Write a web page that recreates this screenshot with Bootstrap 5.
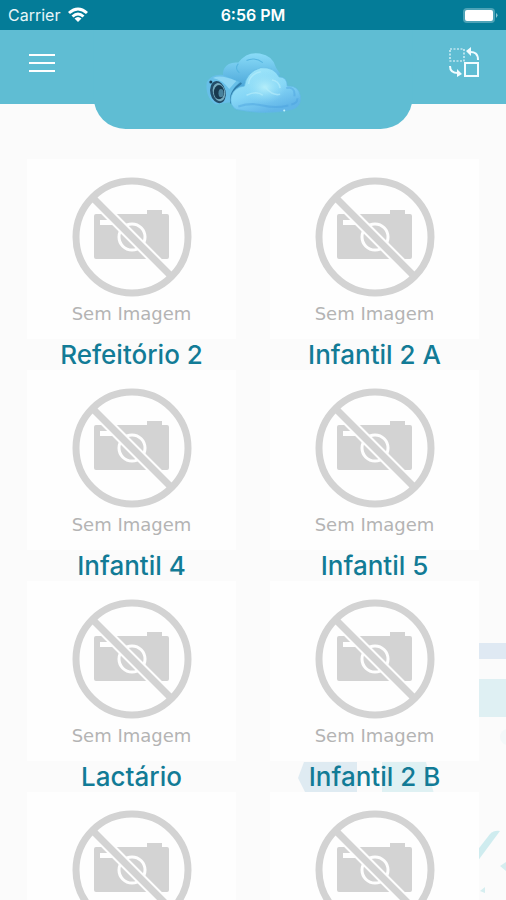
<!DOCTYPE html>
<html lang="pt-BR">
<head>
<meta charset="utf-8">
<meta name="viewport" content="width=device-width, initial-scale=1">
<title>Câmeras</title>
<link href="https://cdn.jsdelivr.net/npm/bootstrap@5.3.0/dist/css/bootstrap.min.css" rel="stylesheet">
<style>
  body { font-family: Inter, "Liberation Sans", sans-serif; background: #fbfbfb; }
  .screen { height: 100vh; }
  .status-bar { height: 30px; background: #047c98; color: #e6f6fa; font-size: 16px; line-height: 30px; }
  .status-bar .clock { font-weight: 600; color: #fff; }
  .app-header { height: 74px; background: #5fbdd3; }
  .header-notch { width: 63%; height: 99px; background: #5fbdd3; border-radius: 0 0 32px 32px; }
  .icon-btn { line-height: 0; }
  .backdrop { z-index: -1; }
  .rooms { padding: 55px 10px 0; }
  .room { padding: 0 17px; }
  .room-image { height: 180px; padding-top: 18px; background: #fefefe; }
  .room-image figcaption { font: 18px/20px "DejaVu Sans", sans-serif; color: #b4b4b4; margin-top: 7px; }
  .room-name { font-size: 26px; line-height: 31px; font-weight: 500; color: #127b96; }
</style>
<script src="https://cdn.jsdelivr.net/npm/bootstrap@5.3.0/dist/js/bootstrap.bundle.min.js"></script>
</head>
<body>
<svg class="d-none" aria-hidden="true">
  <symbol id="no-image" viewBox="0 0 120 120">
    <path fill="#d3d3d3" d="M22 39q0-2 2-2h51v-4h15v4h5q2 0 2 2v41q0 2-2 2H24q-2 0-2-2z"/>
    <path fill="#fefefe" d="M28 43h20v5H28z"/>
    <circle cx="60" cy="60" r="13" fill="none" stroke="#fefefe" stroke-width="3"/>
    <path stroke="#fefefe" stroke-width="11" d="M21 21l78 78"/>
    <path stroke="#d3d3d3" stroke-width="7" d="M20 20l80 80"/>
    <circle cx="60" cy="60" r="56" fill="none" stroke="#d3d3d3" stroke-width="7"/>
  </symbol>
</svg>
<div class="screen position-relative overflow-hidden">
  <svg class="backdrop position-absolute bottom-0 end-0" width="220" height="270" viewBox="0 0 220 270" aria-hidden="true">
    <path fill="#dfe9f3" d="M150 13h70v16h-70z"/>
    <path fill="#dff0f3" d="M150 49h70v38h-70z"/>
    <path fill="#dfebf2" d="M18 132h53v32H20l-8-16z"/>
    <path fill="#dff1f3" d="M96 132h44l8 32H96z"/>
    <path fill="#cfecef" d="M190 222l14-18q4-4 10-3l-23 31z"/>
    <path fill="#d5eef0" d="M214 236l6-4v9zM194 261l5-4v6z"/>
    <circle cx="222" cy="107" r="8" fill="#f3f8f9"/>
  </svg>
  <div class="status-bar d-flex justify-content-between position-relative px-2">
    <div class="d-flex align-items-center gap-2">
      <span>Carrier</span>
      <svg width="20" height="16" viewBox="0 0 20 16" fill="none" stroke="#fff" stroke-width="3" role="img" aria-label="Wi-Fi">
        <path d="M1 6q9-8 18 0M4.500 9.500q5.500-5 11 0"/><path fill="#fff" stroke="none" d="M6.500 11.500q3.500-3 7 0L10 15z"/>
      </svg>
    </div>
    <span class="clock position-absolute start-50 translate-middle-x">6:56 PM</span>
    <svg class="align-self-center" width="36" height="17" viewBox="0 0 36 17" role="img" aria-label="Bateria cheia">
      <rect x="1" y="1" width="32" height="15" rx="4" fill="#4da3b7"/>
      <rect x="3" y="3" width="28" height="11" rx="2" fill="#fff"/>
      <path fill="#8ac3d0" d="M34 6q3 2 0 5z"/>
    </svg>
  </div>
  <header class="app-header d-flex justify-content-between align-items-start">
    <button class="icon-btn btn border-0 p-0 ms-4 mt-3" type="button" aria-label="Menu">
      <svg width="36" height="34" viewBox="0 0 36 34" stroke="#fff" stroke-width="2"><path d="M5 9h26M5 17h26M5 25h26"/></svg>
    </button>
    <div class="header-notch position-absolute start-50 translate-middle-x text-center pt-3">
      <svg width="106" height="74" viewBox="201 47 104 72" role="img" aria-label="Nuvem com câmera">
        <defs>
          <linearGradient id="back" x2="0" y2="1"><stop stop-color="#8adcf8"/><stop offset="1" stop-color="#439fd5"/></linearGradient>
          <linearGradient id="front" x2=".5" y2="1"><stop stop-color="#a6eafb"/><stop offset=".6" stop-color="#85d6f6"/><stop offset="1" stop-color="#61b5e8"/></linearGradient>
          <radialGradient id="shine"><stop stop-color="#b5eefa"/><stop offset="1" stop-color="#8bdaf6" stop-opacity="0"/></radialGradient>
        </defs>
        <path fill="url(#back)" d="M231 86Q221 78 225 69Q229 62 239 63Q247 52 260 54Q273 56 276 68L280 74 268 88 239 92z"/>
        <path fill="none" stroke="#56b5e0" d="M239 64q-4 5 1 9M247 61q8-4 16 2"/>
        <path fill="#67bfe8" d="M208 82q5-8 15-7l17 7q-9 8-9 20l-14 2q-11-7-9-22z"/>
        <path fill="#8dd6f4" d="M214 78q8-4 23 3l-7 8q-6-9-16-11z"/>
        <ellipse cx="219" cy="92" rx="7.500" ry="11" fill="#234d69" transform="rotate(-13 219 92)"/>
        <ellipse cx="220" cy="92" rx="6" ry="9" fill="#75aabd" transform="rotate(-13 220 92)"/>
        <ellipse cx="220" cy="92" rx="5" ry="7" fill="#18394f"/>
        <ellipse cx="222" cy="93" rx="2.500" ry="4" fill="#49829c"/>
        <circle cx="212" cy="82" r="1.500" fill="#173b54"/>
        <path fill="none" stroke="#307eaa" stroke-width="2" d="M232 103q-2-12 10-20"/>
        <path fill="url(#front)" stroke="#60b9e3" stroke-width=".7" d="M237 109q-7-4-5-13 3-9 13-10 2-14 16-18 13-1 18 9 8 0 8 9 11-1 13 10 1 10-8 13-25 6-55 0z"/>
        <ellipse cx="265" cy="87" rx="21" ry="16" fill="url(#shine)"/>
        <path fill="none" stroke="#469edb" stroke-width="2" opacity=".4" d="M286 88q9-2 8 8M291 104q6-1 6-6M239 106q12-4 24-1t25 0"/>
        <path fill="none" stroke="#b9effb" stroke-width="1.500" opacity=".6" d="M249 84q1-10 12-12M247 95q10-5 16 0M272 80q7 1 8 8M266 88q7 8 14 6"/>
        <circle cx="284" cy="110" r="1" fill="#c6f4fb"/>
      </svg>
    </div>
    <button class="icon-btn btn border-0 p-0 me-4 mt-3 position-relative" type="button" aria-label="Alternar visualização">
      <svg width="36" height="34" viewBox="0 0 36 34" fill="none" stroke="#f2fcff">
        <path stroke-width="1.200" stroke-dasharray="2 1.500" d="M4 3h14v12H4z"/>
        <path stroke-width="2" d="M19 17h13v13H19zM23 6q9-1 9 8M4 20q0 7 8 7"/>
        <path fill="#f2fcff" stroke="none" d="M20 5l5-4v9zM16 28l-5-5v8z"/>
      </svg>
    </button>
  </header>
  <main class="rooms">
    <div class="row g-0 text-center">
      <div class="room col-6"><figure class="room-image m-0"><svg width="120" height="120" class="d-block mx-auto" aria-hidden="true"><use href="#no-image"/></svg><figcaption>Sem Imagem</figcaption></figure><h2 class="room-name m-0">Refeitório 2</h2></div>
      <div class="room col-6"><figure class="room-image m-0"><svg width="120" height="120" class="d-block mx-auto" aria-hidden="true"><use href="#no-image"/></svg><figcaption>Sem Imagem</figcaption></figure><h2 class="room-name m-0">Infantil 2 A</h2></div>
      <div class="room col-6"><figure class="room-image m-0"><svg width="120" height="120" class="d-block mx-auto" aria-hidden="true"><use href="#no-image"/></svg><figcaption>Sem Imagem</figcaption></figure><h2 class="room-name m-0">Infantil 4</h2></div>
      <div class="room col-6"><figure class="room-image m-0"><svg width="120" height="120" class="d-block mx-auto" aria-hidden="true"><use href="#no-image"/></svg><figcaption>Sem Imagem</figcaption></figure><h2 class="room-name m-0">Infantil 5</h2></div>
      <div class="room col-6"><figure class="room-image m-0"><svg width="120" height="120" class="d-block mx-auto" aria-hidden="true"><use href="#no-image"/></svg><figcaption>Sem Imagem</figcaption></figure><h2 class="room-name m-0">Lactário</h2></div>
      <div class="room col-6"><figure class="room-image m-0"><svg width="120" height="120" class="d-block mx-auto" aria-hidden="true"><use href="#no-image"/></svg><figcaption>Sem Imagem</figcaption></figure><h2 class="room-name m-0">Infantil 2 B</h2></div>
      <div class="room col-6"><figure class="room-image m-0"><svg width="120" height="120" class="d-block mx-auto" aria-hidden="true"><use href="#no-image"/></svg></figure></div>
      <div class="room col-6"><figure class="room-image m-0"><svg width="120" height="120" class="d-block mx-auto" aria-hidden="true"><use href="#no-image"/></svg></figure></div>
    </div>
  </main>
</div>
</body>
</html>
